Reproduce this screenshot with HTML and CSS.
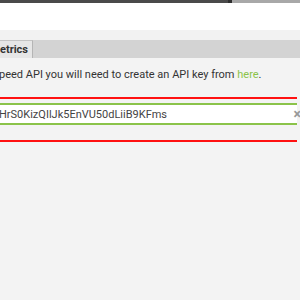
FILE: index.html
```html
<!DOCTYPE html>
<html lang="en">
<head>
  <meta charset="UTF-8">
  <title>Settings</title>
  <link rel="stylesheet" href="styles.css">
</head>
<body>
  <div class="topbar">
    <div class="topbar-dark"></div>
    <div class="topbar-sep"></div>
    <div class="topbar-light"></div>
  </div>
  <div class="header"></div>
  <div class="strip"></div>
  <div class="tabs">
    <div class="tab">etrics</div>
  </div>
  <div class="content">
    <p class="note">peed API you will need to create an API key from <a href="#">here</a>.</p>
    <div class="field">
      <div class="input">
        <span class="value">HrS0KizQIlJk5EnVU50dLiiB9KFms</span>
        <span class="clear">&times;</span>
      </div>
    </div>
  </div>
</body>
</html>
```

FILE: styles.css
```css
html, body {
  margin: 0;
  padding: 0;
}
body {
  font-family: Roboto, "Liberation Sans", Arial, sans-serif;
  background-color: #f3f3f3;
  color: #333;
  width: 300px;
  height: 300px;
  overflow: hidden;
}
.topbar {
  display: flex;
  height: 3px;
}
.topbar-dark {
  width: 228px;
  background-color: #4a4a4a;
}
.topbar-sep {
  width: 4px;
  background-color: #2e2e2e;
}
.topbar-light {
  flex: 1;
  background-color: #a8a8a8;
}
.header {
  height: 27px;
  background-color: #fff;
}
.strip {
  height: 10px;
  background-color: #f2f2f2;
}
.tabs {
  height: 18px;
  background-color: #d3d3d3;
  display: flex;
  align-items: flex-end;
}
.tab {
  height: 17px;
  line-height: 17px;
  padding: 0 4px 0 0;
  font-size: 11px;
  font-weight: bold;
  color: #333;
  background-color: #e6e6e6;
  border-right: 1px solid #b5b5b5;
  border-top: 1px solid #c4c4c4;
  white-space: nowrap;
}
.content {
  padding-top: 9px;
}
.note {
  margin: 0 0 0 -1px;
  font-size: 11px;
  line-height: 16px;
  white-space: nowrap;
}
.note a {
  color: #8bc34a;
  text-decoration: none;
}
.field {
  margin-top: 14px;
  border-top: 2px solid #ff1111;
  border-bottom: 2px solid #ff1111;
  width: 297px;
  padding: 4px 0 15px;
}
.input {
  display: flex;
  align-items: center;
  justify-content: space-between;
  height: 18px;
  background-color: #fff;
  border-top: 2px solid #8bc34a;
  border-bottom: 2px solid #8bc34a;
}
.value {
  font-size: 11px;
  color: #444;
  margin-left: -1px;
}
.clear {
  font-size: 14px;
  font-weight: bold;
  color: #999;
  margin-right: -4px;
}
```
